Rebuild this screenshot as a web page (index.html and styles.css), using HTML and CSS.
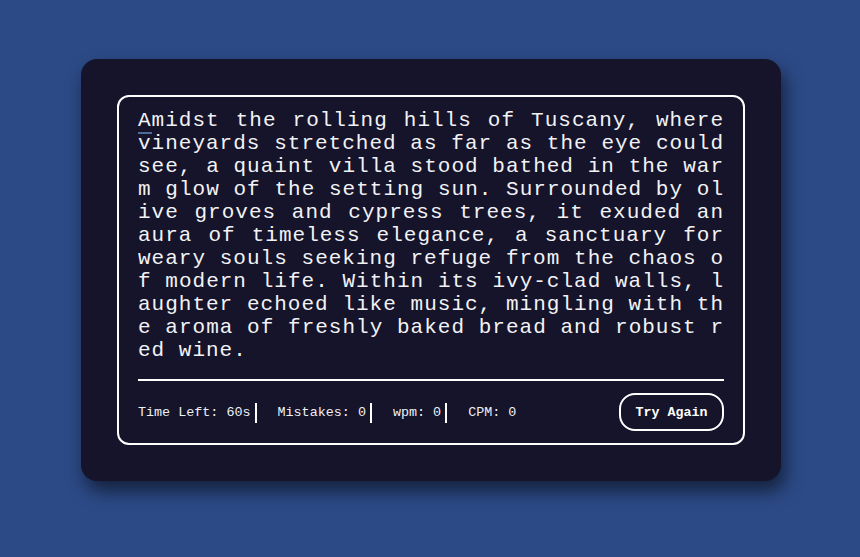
FILE: index.html
```html
<!DOCTYPE html>
<html lang="en">
<head>
<meta charset="utf-8">
<title>Typing Test</title>
<link rel="stylesheet" href="styles.css">
</head>
<body>
<div class="card">
  <div class="box">
    <p class="text"><span class="cursor">A</span>midst the rolling hills of Tuscany, where vineyards stretched as far as the eye could see, a quaint villa stood bathed in the warm glow of the setting sun. Surrounded by olive groves and cypress trees, it exuded an aura of timeless elegance, a sanctuary for weary souls seeking refuge from the chaos of modern life. Within its ivy-clad walls, laughter echoed like music, mingling with the aroma of freshly baked bread and robust red wine.</p>
    <div class="footer">
      <ul class="stats">
        <li class="stat">Time Left: <span>60s</span></li>
        <li class="stat">Mistakes: <span>0</span></li>
        <li class="stat">wpm: <span>0</span></li>
        <li class="stat last">CPM: <span>0</span></li>
      </ul>
      <button class="btn">Try Again</button>
    </div>
  </div>
</div>
</body>
</html>
```
FILE: styles.css
```css
* { box-sizing: border-box; }
html, body { margin: 0; padding: 0; }
body {
  background: #2c4a86;
  min-height: 557px;
  display: flex;
  justify-content: center;
  align-items: flex-start;
  padding: 59px 0 0 2px;
  font-family: "Liberation Mono", monospace;
}
.card {
  width: 700px;
  background: #15142a;
  border-radius: 16px;
  padding: 36px;
  box-shadow: 4px 10px 18px rgba(0, 0, 0, 0.55);
}
.box {
  border: 2px solid #ffffff;
  border-radius: 12px;
  padding: 12px 19px 0;
}
.text {
  margin: 0 0 17px;
  color: #f2f2f5;
  font-size: 21px;
  line-height: 23px;
  letter-spacing: 1px;
  text-align: justify;
  word-break: break-all;
}
.cursor {
  border-bottom: 2px solid #4d6b96;
}
.footer {
  border-top: 2px solid #ffffff;
  padding: 12px 0;
  display: flex;
  justify-content: space-between;
  align-items: center;
}
.stats {
  list-style: none;
  margin: 2px 0 0;
  padding: 0;
  display: flex;
  align-items: center;
}
.stat {
  color: #eef0f5;
  font-size: 13.4px;
  line-height: 20px;
  height: 20px;
  padding-right: 4px;
  margin-right: 21px;
  border-right: 2px solid #ffffff;
}
.stat.last {
  border-right: none;
  margin-right: 0;
}
.btn {
  font-family: "Liberation Mono", monospace;
  font-weight: bold;
  font-size: 13.3px;
  color: #ffffff;
  background: transparent;
  border: 2px solid #ffffff;
  border-radius: 16px;
  width: 105px;
  height: 38px;
  padding: 0;
  cursor: pointer;
}
```
